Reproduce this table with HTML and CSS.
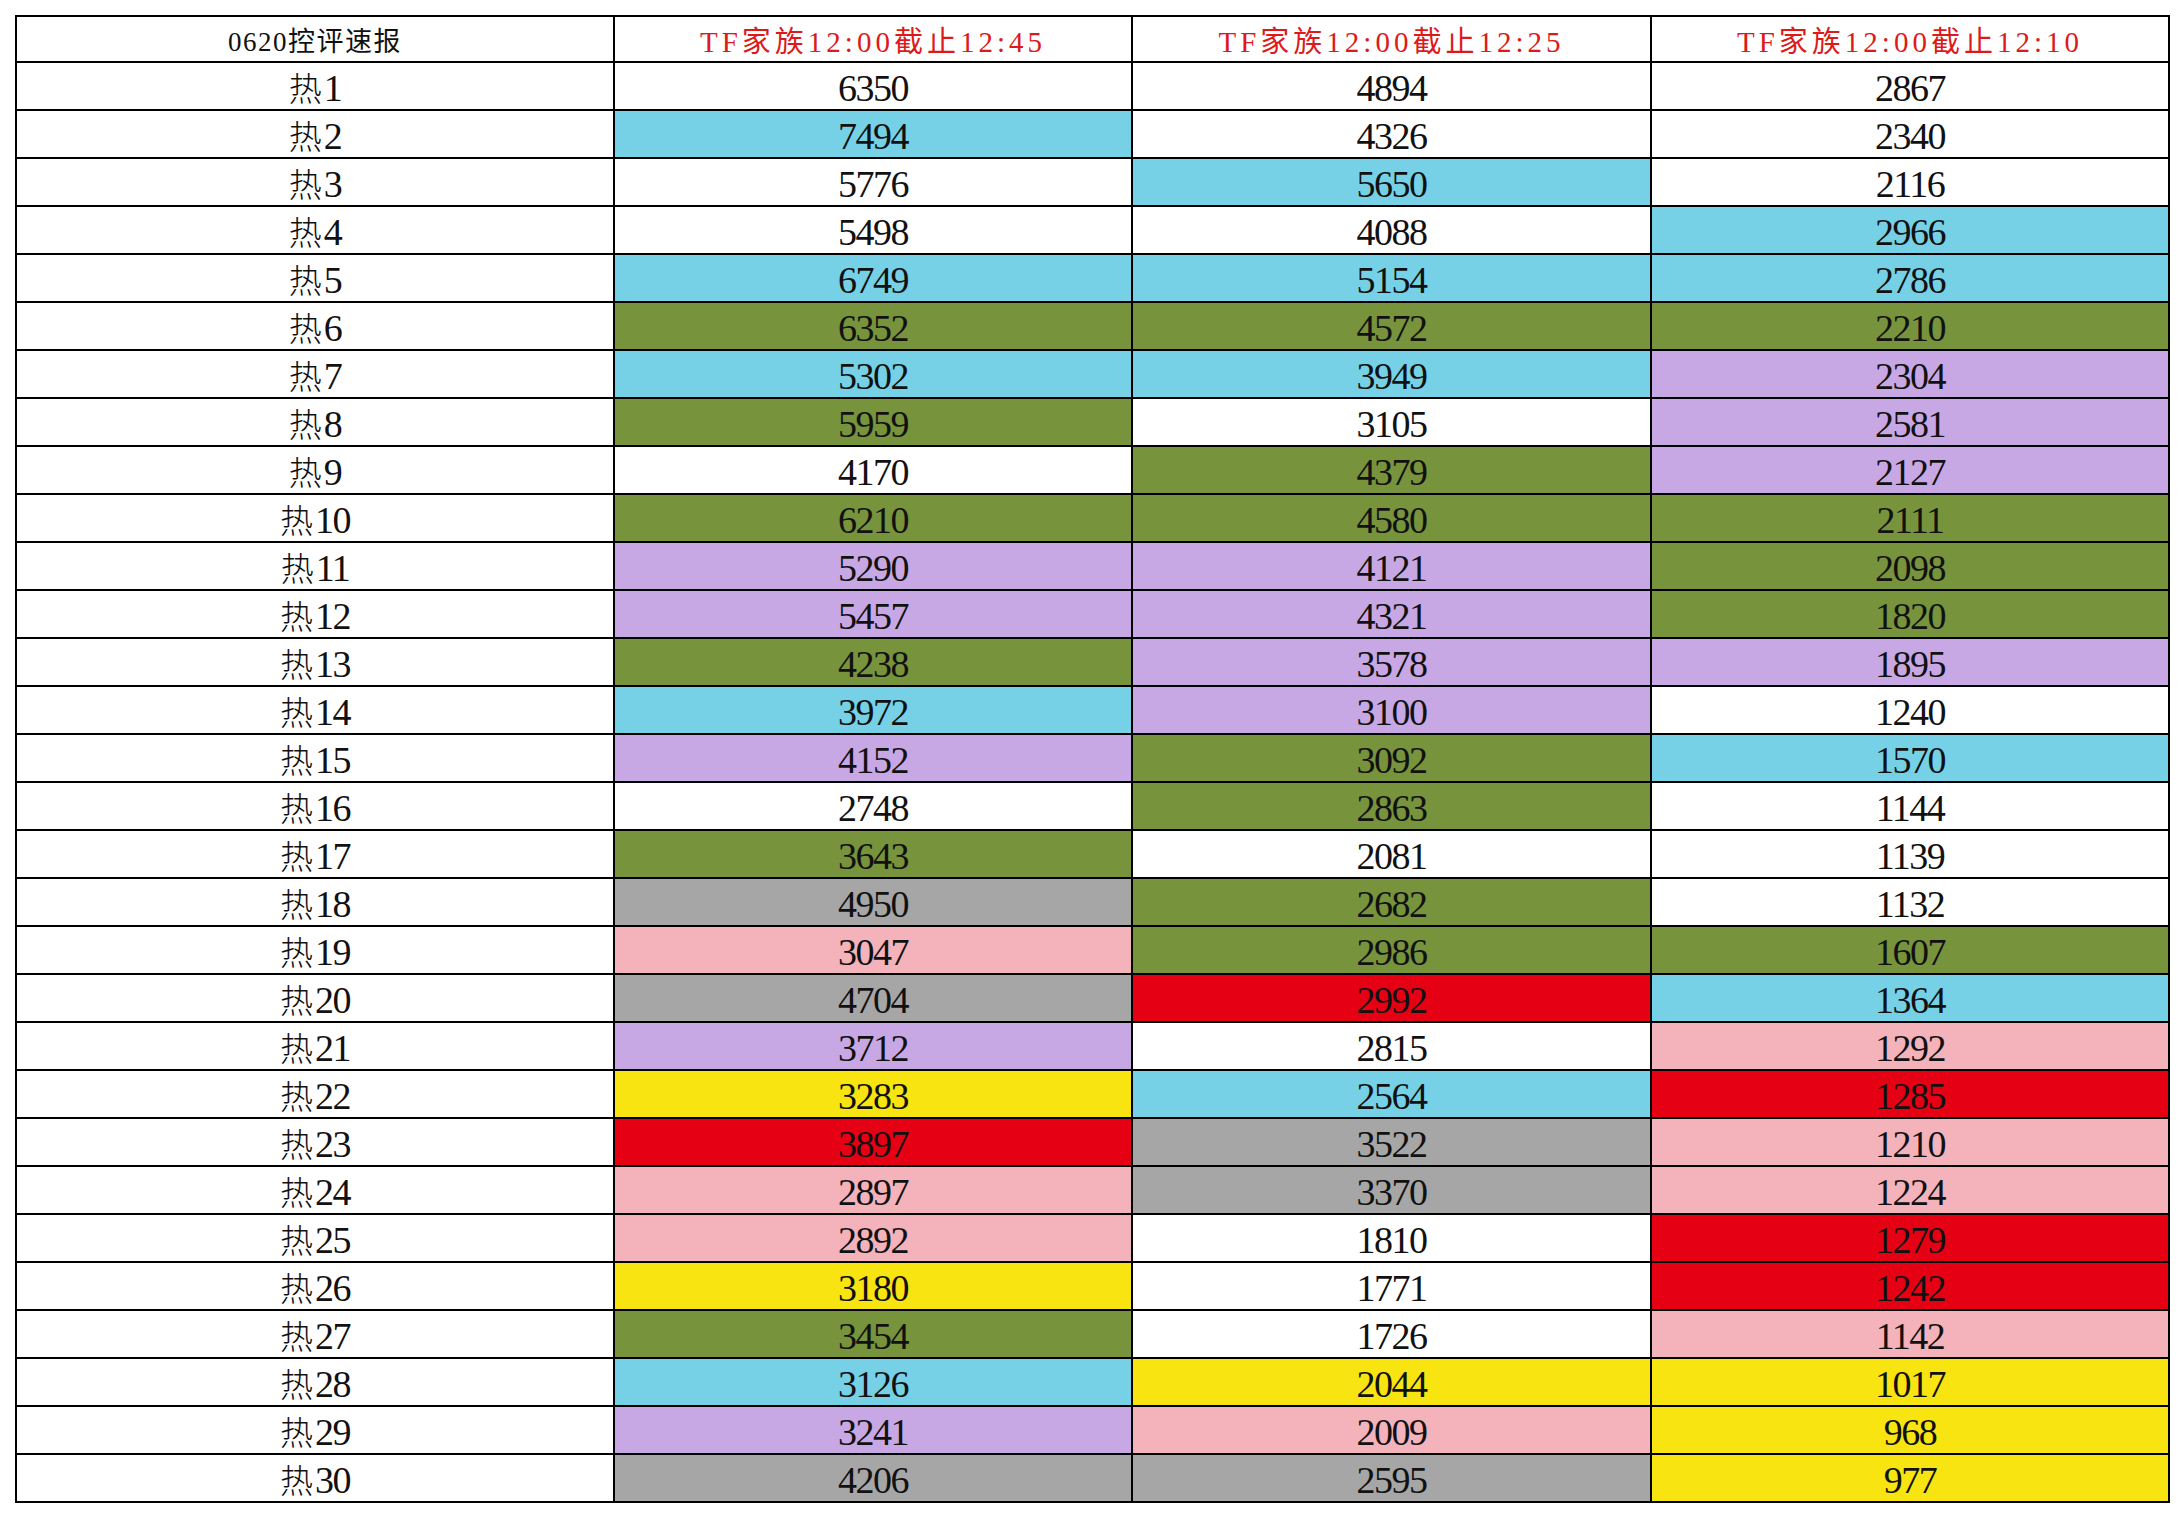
FILE: index.html
```html
<!DOCTYPE html>
<html lang="zh-CN">
<head>
<meta charset="utf-8">
<title>0620控评速报</title>
<link rel="stylesheet" href="styles.css">
</head>
<body>
<div class="sheet">
  <div class="cell head head-title">0620控评速报</div>
  <div class="cell head head-red">TF家族12:00截止12:45</div>
  <div class="cell head head-red">TF家族12:00截止12:25</div>
  <div class="cell head head-red">TF家族12:00截止12:10</div>

  <div class="cell label"><span class="hz">热</span>1</div><div class="cell num">6350</div><div class="cell num">4894</div><div class="cell num">2867</div>
  <div class="cell label"><span class="hz">热</span>2</div><div class="cell num cyan">7494</div><div class="cell num">4326</div><div class="cell num">2340</div>
  <div class="cell label"><span class="hz">热</span>3</div><div class="cell num">5776</div><div class="cell num cyan">5650</div><div class="cell num">2116</div>
  <div class="cell label"><span class="hz">热</span>4</div><div class="cell num">5498</div><div class="cell num">4088</div><div class="cell num cyan">2966</div>
  <div class="cell label"><span class="hz">热</span>5</div><div class="cell num cyan">6749</div><div class="cell num cyan">5154</div><div class="cell num cyan">2786</div>
  <div class="cell label"><span class="hz">热</span>6</div><div class="cell num green">6352</div><div class="cell num green">4572</div><div class="cell num green">2210</div>
  <div class="cell label"><span class="hz">热</span>7</div><div class="cell num cyan">5302</div><div class="cell num cyan">3949</div><div class="cell num purple">2304</div>
  <div class="cell label"><span class="hz">热</span>8</div><div class="cell num green">5959</div><div class="cell num">3105</div><div class="cell num purple">2581</div>
  <div class="cell label"><span class="hz">热</span>9</div><div class="cell num">4170</div><div class="cell num green">4379</div><div class="cell num purple">2127</div>
  <div class="cell label"><span class="hz">热</span>10</div><div class="cell num green">6210</div><div class="cell num green">4580</div><div class="cell num green">2111</div>
  <div class="cell label"><span class="hz">热</span>11</div><div class="cell num purple">5290</div><div class="cell num purple">4121</div><div class="cell num green">2098</div>
  <div class="cell label"><span class="hz">热</span>12</div><div class="cell num purple">5457</div><div class="cell num purple">4321</div><div class="cell num green">1820</div>
  <div class="cell label"><span class="hz">热</span>13</div><div class="cell num green">4238</div><div class="cell num purple">3578</div><div class="cell num purple">1895</div>
  <div class="cell label"><span class="hz">热</span>14</div><div class="cell num cyan">3972</div><div class="cell num purple">3100</div><div class="cell num">1240</div>
  <div class="cell label"><span class="hz">热</span>15</div><div class="cell num purple">4152</div><div class="cell num green">3092</div><div class="cell num cyan">1570</div>
  <div class="cell label"><span class="hz">热</span>16</div><div class="cell num">2748</div><div class="cell num green">2863</div><div class="cell num">1144</div>
  <div class="cell label"><span class="hz">热</span>17</div><div class="cell num green">3643</div><div class="cell num">2081</div><div class="cell num">1139</div>
  <div class="cell label"><span class="hz">热</span>18</div><div class="cell num gray">4950</div><div class="cell num green">2682</div><div class="cell num">1132</div>
  <div class="cell label"><span class="hz">热</span>19</div><div class="cell num pink">3047</div><div class="cell num green">2986</div><div class="cell num green">1607</div>
  <div class="cell label"><span class="hz">热</span>20</div><div class="cell num gray">4704</div><div class="cell num red">2992</div><div class="cell num cyan">1364</div>
  <div class="cell label"><span class="hz">热</span>21</div><div class="cell num purple">3712</div><div class="cell num">2815</div><div class="cell num pink">1292</div>
  <div class="cell label"><span class="hz">热</span>22</div><div class="cell num yellow">3283</div><div class="cell num cyan">2564</div><div class="cell num red">1285</div>
  <div class="cell label"><span class="hz">热</span>23</div><div class="cell num red">3897</div><div class="cell num gray">3522</div><div class="cell num pink">1210</div>
  <div class="cell label"><span class="hz">热</span>24</div><div class="cell num pink">2897</div><div class="cell num gray">3370</div><div class="cell num pink">1224</div>
  <div class="cell label"><span class="hz">热</span>25</div><div class="cell num pink">2892</div><div class="cell num">1810</div><div class="cell num red">1279</div>
  <div class="cell label"><span class="hz">热</span>26</div><div class="cell num yellow">3180</div><div class="cell num">1771</div><div class="cell num red">1242</div>
  <div class="cell label"><span class="hz">热</span>27</div><div class="cell num green">3454</div><div class="cell num">1726</div><div class="cell num pink">1142</div>
  <div class="cell label"><span class="hz">热</span>28</div><div class="cell num cyan">3126</div><div class="cell num yellow">2044</div><div class="cell num yellow">1017</div>
  <div class="cell label"><span class="hz">热</span>29</div><div class="cell num purple">3241</div><div class="cell num pink">2009</div><div class="cell num yellow">968</div>
  <div class="cell label"><span class="hz">热</span>30</div><div class="cell num gray">4206</div><div class="cell num gray">2595</div><div class="cell num yellow">977</div>
</div>
</body>
</html>
```

FILE: styles.css
```css
html, body {
  margin: 0;
  padding: 0;
  background: #ffffff;
}

.sheet {
  display: grid;
  grid-template-columns: 596px 516px 517px 516px;
  grid-template-rows: 44px repeat(30, 46px);
  gap: 2px;
  padding: 2px;
  background: #000000;
  width: max-content;
  margin: 15px 0 0 15px;
}

.cell {
  display: flex;
  align-items: center;
  justify-content: center;
  background: #ffffff;
  color: #111111;
  font-family: "Liberation Serif", "Noto Sans CJK SC", serif;
  line-height: 1;
  white-space: nowrap;
}

.head {
  font-size: 29px;
  padding-top: 6px;
  box-sizing: border-box;
}

.head-title {
  color: #111111;
  letter-spacing: 1.5px;
  font-size: 27px;
}

.head-red {
  color: #dc1a1a;
  letter-spacing: 4px;
}

.label,
.num {
  font-size: 38px;
  letter-spacing: -1.5px;
  padding-top: 3px;
  box-sizing: border-box;
}

.hz {
  font-family: "Noto Sans CJK SC", sans-serif;
  font-weight: 300;
  font-size: 33px;
  line-height: 1;
  letter-spacing: 0;
  margin-right: 2px;
}

.cyan { background: #76d1e7; }
.green { background: #77933c; }
.purple { background: #c8a8e4; }
.pink { background: #f4b2bb; }
.gray { background: #a6a6a6; }
.red { background: #e50013; }
.yellow { background: #f7e411; }
```
